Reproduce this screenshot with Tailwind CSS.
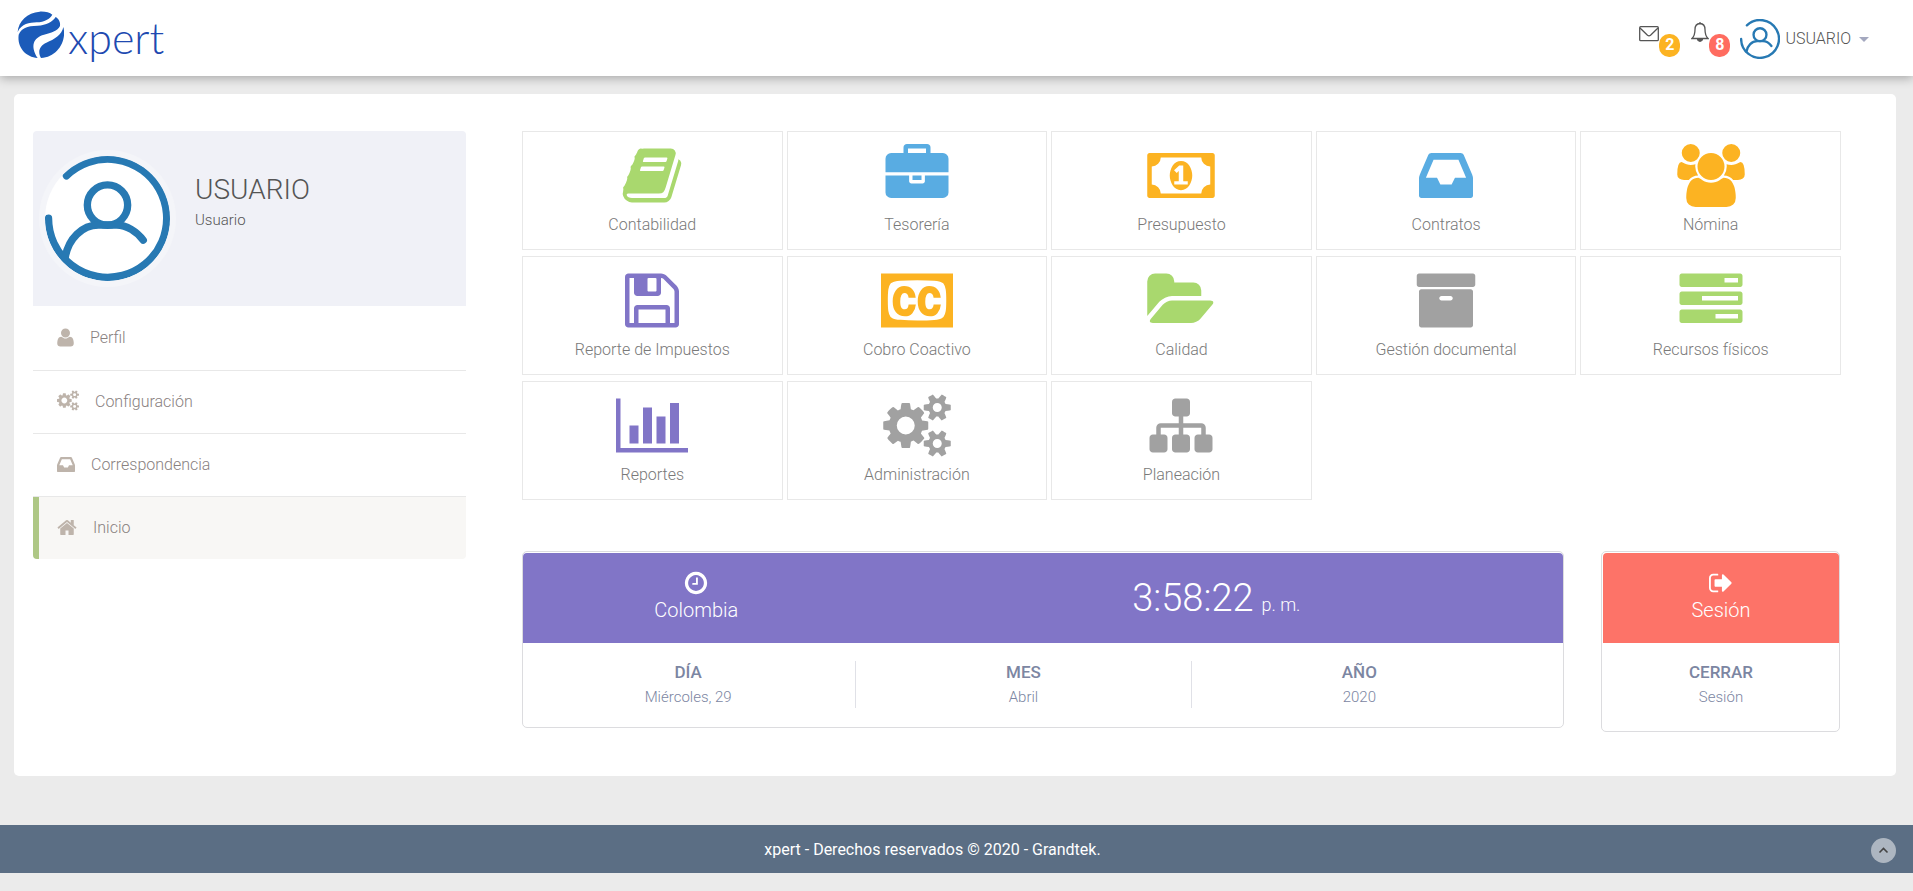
<!DOCTYPE html>
<html lang="es">
<head>
<meta charset="utf-8">
<title>xpert</title>
<script src="https://cdn.jsdelivr.net/npm/@tailwindcss/browser@4"></script>
</head>
<body class="bg-[#ebebeb] font-['Roboto','Liberation_Sans',sans-serif] text-base leading-5 font-light text-[#797979]">

<svg class="hidden" aria-hidden="true">
  <symbol id="cogs" viewBox="0 0 1920 1792"><path d="M896 896q0-106-75-181t-181-75-181 75-75 181 75 181 181 75 181-75 75-181zm768 512q0-52-38-90t-90-38-90 38-38 90q0 53 37.500 90.500t90.500 37.500 90.500-37.500 37.500-90.500zm0-1024q0-52-38-90t-90-38-90 38-38 90q0 53 37.500 90.500t90.500 37.500 90.500-37.500 37.500-90.500zm-384 421v185q0 10-7 19.500t-16 10.500l-155 24q-11 35-32 76 34 48 90 115 7 11 7 20 0 12-7 19-23 30-82.500 89.500t-78.500 59.500q-11 0-21-7l-115-90q-37 19-77 31-11 108-23 155-7 24-30 24h-186q-11 0-20-7.500t-10-17.500l-23-153q-34-10-75-31l-118 89q-7 7-20 7-11 0-21-8-144-133-144-160 0-9 7-19 10-14 41-53t47-61q-23-44-35-82l-152-24q-10-1-17-9.500t-7-19.500v-185q0-10 7-19.500t16-10.500l155-24q11-35 32-76-34-48-90-115-7-11-7-20 0-12 7-20 22-30 82-89t79-59q11 0 21 7l115 90q34-18 77-32 11-108 23-154 7-24 30-24h186q11 0 20 7.500t10 17.500l23 153q34 10 75 31l118-89q8-7 20-7 11 0 21 8 144 133 144 160 0 8-7 19-12 16-42 54t-45 60q23 48 34 82l152 23q10 2 17 10.500t7 19.500zm640 533v140q0 16-149 31-12 27-30 52 51 113 51 138 0 4-4 7-122 71-124 71-8 0-46-47t-52-68q-20 2-30 2t-30-2q-14 21-52 68t-46 47q-2 0-124-71-4-3-4-7 0-25 51-138-18-25-30-52-149-15-149-31v-140q0-16 149-31 13-29 30-52-51-113-51-138 0-4 4-7 4-2 35-20t59-34 30-16q8 0 46 46.500t52 67.500q20-2 30-2t30 2q51-71 92-112l6-2q4 0 124 70 4 3 4 7 0 25-51 138 17 23 30 52 149 15 149 31zm0-1024v140q0 16-149 31-12 27-30 52 51 113 51 138 0 4-4 7-122 71-124 71-8 0-46-47t-52-68q-20 2-30 2t-30-2q-14 21-52 68t-46 47q-2 0-124-71-4-3-4-7 0-25 51-138-18-25-30-52-149-15-149-31v-140q0-16 149-31 13-29 30-52-51-113-51-138 0-4 4-7 4-2 35-20t59-34 30-16q8 0 46 46.500t52 67.500q20-2 30-2t30 2q51-71 92-112l6-2q4 0 124 70 4 3 4 7 0 25-51 138 17 23 30 52 149 15 149 31z"/></symbol>
  <symbol id="inbox" viewBox="128 0 1536 1792"><path d="M1151 960h316q-1-3-2.500-8.500t-2.500-7.500l-212-496h-708l-212 496q-1 3-2.500 8.500t-2.500 7.500h316l95 192h320zm513 30v482q0 26-19 45t-45 19h-1408q-26 0-45-19t-19-45v-482q0-62 25-123l238-552q10-25 36.500-42t52.500-17h832q26 0 52.500 17t36.500 42l238 552q25 61 25 123z"/></symbol>
  <symbol id="avatar" viewBox="0 0 124 124"><g fill="none" stroke="#2779b3" stroke-width="7.300" stroke-linecap="round" stroke-linejoin="round"><path d="M21.300 19.700A58.600 58.600 0 1 1 3.500 61.700"/><circle cx="62" cy="48.700" r="20"/><path d="M20 101C23 82 37 68.500 53 68.500H71C81 68.500 91 75 97.500 83.500"/></g></symbol>
</svg>

<header class="relative flex h-[76px] items-center justify-between bg-white pl-4 pr-11 shadow-[0_2px_10px_rgba(0,0,0,0.3)]">
  <a href="#" class="flex items-center gap-1 text-[#2049b0]" aria-label="xpert">
    <svg class="-mt-2 size-12" viewBox="0 0 144 144" fill="#1b5bb9">
      <path d="M5 66C7 34 34 7 71 5C87 4 101 8 109 14C102 26 85 37 62 37C40 38 17 41 5 66Z"/>
      <path d="M8 74C15 56 33 47 65 47C91 46 110 35 119 21C129 27 134 38 132 48C125 63 105 69 84 74C52 83 42 108 65 144C30 141 3 113 8 74Z"/>
      <path d="M142 51C153 91 125 142 75 144C64 124 71 107 91 98C115 88 138 74 142 51Z"/>
    </svg>
    <span class="font-['Lato','Liberation_Sans',sans-serif] text-[43px] leading-[48px] font-light">xpert</span>
  </a>
  <div class="flex items-center pt-0.5">
    <a href="#" class="flex" aria-label="Mensajes">
      <svg class="mt-[3px] h-[17px] w-5" viewBox="0 0 20 17" fill="none" stroke="#555" stroke-width="1.300"><rect x=".7" y="1.700" width="18.600" height="14" rx="1"/><path d="M1 3L8.500 10.300Q10 11.500 11.500 10.300L19 3"/></svg>
      <span class="mt-3 flex h-[23px] w-[21px] items-center justify-center rounded-[10px] bg-[#fcb322] font-bold text-white">2</span>
    </a>
    <a href="#" class="ml-[11px] flex" aria-label="Notificaciones">
      <svg class="h-5 w-[18px]" viewBox="0 0 18 20" fill="none" stroke="#555" stroke-width="1.300"><path d="M9 1.500C5.500 1.700 4 4.200 4 7.500C4 12 3 14.500 1 16.500H17C15 14.500 14 12 14 7.500C14 4.200 12.500 1.700 9 1.500ZM9 0V2"/><path d="M6.500 17C7 20 11 20 11.500 17Z" fill="#555"/></svg>
      <span class="mt-3 flex h-[23px] w-[21px] items-center justify-center rounded-[10px] bg-[#ff6c60] font-bold text-white">8</span>
    </a>
    <button type="button" class="ml-2.5 flex items-center text-[#555]">
      <svg class="size-10"><use href="#avatar"/></svg>
      <span class="ml-[5px]">USUARIO</span>
      <span class="ml-2 border-x-5 border-t-5 border-x-transparent border-t-[#a4a8bf]"></span>
    </button>
  </div>
</header>

<main class="mx-[14px] mt-[18px] mr-[17px] grid grid-cols-[433fr_1319fr] gap-14 rounded-[5px] bg-white pt-[37px] pr-[55px] pb-11 pl-[19px]">
  <aside>
    <div class="flex h-[175px] rounded-t-[4px] bg-[#f0f1f7] pl-1.5 pt-[19px]">
      <div class="size-[137px] rounded-full bg-[#f4f5f9] p-1.5"><svg class="size-[125px] rounded-full bg-white"><use href="#avatar"/></svg></div>
      <div class="ml-[19px] pt-6 text-[#555]">
        <h1 class="text-[28px] leading-8">USUARIO</h1>
        <p class="mt-1 text-[15px]">Usuario</p>
      </div>
    </div>
    <nav class="text-[#89817f]">
      <a href="#" class="flex h-[65px] items-center border-b border-[#e8e8e8] pl-6"><svg class="mb-0.5 h-[21px] w-[17px] fill-[#beb4ab]" viewBox="192 0 1408 1792"><path d="M1600 1405q0 120-73 189.500t-194 69.500h-874q-121 0-194-69.500t-73-189.500q0-53 3.500-103.500t14-109 26.500-108.500 43-97.500 62-81 85.500-53.500 111.500-20q9 0 42 21.500t74.500 48 108 48 133.500 21.500 133.500-21.500 108-48 74.500-48 42-21.500q61 0 111.500 20t85.500 53.500 62 81 43 97.500 26.500 108.500 14 109 3.500 103.500zm-320-893q0 159-112.500 271.500t-271.500 112.500-271.500-112.500-112.500-271.500 112.500-271.500 271.500-112.500 271.500 112.500 112.500 271.500z"/></svg><span class="ml-4">Perfil</span></a>
      <a href="#" class="flex h-[63px] items-center border-b border-[#e8e8e8] pl-6"><svg class="mb-1 h-[21px] w-[22px] fill-[#beb4ab]"><use href="#cogs"/></svg><span class="ml-4">Configuración</span></a>
      <a href="#" class="flex h-[63px] items-center border-b border-[#e8e8e8] pl-6"><svg class="mb-0.5 h-[21px] w-[18px] fill-[#beb4ab]"><use href="#inbox"/></svg><span class="ml-4">Correspondencia</span></a>
      <a href="#" class="flex h-[62px] items-center rounded-b-[4px] border-l-6 border-[#aec785] bg-[#f8f7f5] pl-[18px]" aria-current="page"><svg class="mb-0.5 h-[21px] w-5 fill-[#beb4ab]" viewBox="64 0 1664 1792"><path d="M1472 992v480q0 26-19 45t-45 19h-384v-384h-256v384h-384q-26 0-45-19t-19-45v-480q0-1 .5-3t.5-3l575-474 575 474q1 2 1 6zm223-69l-62 74q-8 9-21 11h-3q-13 0-21-7l-692-577-692 577q-12 8-24 7-13-2-21-11l-62-74q-8-10-7-23.500t11-21.500l719-599q32-26 76-26t76 26l244 204v-195q0-14 9-23t23-9h192q14 0 23 9t9 23v408l219 182q10 8 11 21.500t-7 23.500z"/></svg><span class="ml-4">Inicio</span></a>
    </nav>
  </aside>

  <div>
    <div class="grid grid-cols-5 gap-x-1 gap-y-1.5 text-center">
      <a href="#" class="flex h-[119px] flex-col items-center border border-[#e8e8e8] pt-3"><svg class="h-[63px] w-[72px] fill-[#a9d86e]" viewBox="0 0 1792 1792"><path d="M1703 478q40 57 18 129l-275 906q-19 64-76.500 107.500t-122.500 43.500h-923q-77 0-148.500-53.500t-99.500-131.500q-24-67-2-127 0-4 3-27t4-37q1-8-3-21.500t-3-19.500q2-11 8-21t16.500-23.500 16.500-23.500q23-38 45-91.500t30-91.500q3-10 .5-30t-.5-28q3-11 17-28t17-23q21-36 42-92t25-90q1-9-2.500-32t.5-28q4-13 22-30.500t22-22.500q19-26 42.500-84.500t27.500-96.500q1-8-3-25.500t-2-26.500q2-8 9-18t18-23 17-21q8-12 16.500-30.500t15-35 16-36 19.500-32 26.500-23.500 36-11.500 47.500 5.500l-1 3q38-9 51-9h761q74 0 114 56t18 130l-274 906q-36 119-71.500 153.500t-128.500 34.500h-869q-27 0-38 15-11 16-1 43 24 70 144 70h923q29 0 56-15.500t35-41.500l300-987q7-22 5-57 38 15 59 43zm-1064 2q-4 13 2 22.500t20 9.500h608q13 0 25.500-9.500t16.500-22.500l21-64q4-13-2-22.500t-20-9.500h-608q-13 0-25.500 9.500t-16.500 22.500zm-83 256q-4 13 2 22.500t20 9.500h608q13 0 25.500-9.500t16.500-22.500l21-64q4-13-2-22.500t-20-9.500h-608q-13 0-25.500 9.500t-16.500 22.500z"/></svg><span class="mt-2">Contabilidad</span></a>
      <a href="#" class="flex h-[119px] flex-col items-center border border-[#e8e8e8] pt-3"><svg class="h-[63px] w-[72px] fill-[#59ace2]" viewBox="0 0 1792 1792"><path d="M640 256h512v-128h-512v128zm1152 640v480q0 66-47 113t-113 47h-1472q-66 0-113-47t-47-113v-480h672v160q0 26 19 45t45 19h320q26 0 45-19t19-45v-160h672zm-768 0v128h-256v-128h256zm768-480v384h-1792v-384q0-66 47-113t113-47h352v-160q0-40 28-68t68-28h576q40 0 68 28t28 68v160h352q66 0 113 47t47 113z"/></svg><span class="mt-2">Tesorería</span></a>
      <a href="#" class="flex h-[119px] flex-col items-center border border-[#e8e8e8] pt-3"><svg class="h-[63px] w-[72px] fill-[#fcb322]" viewBox="0 0 1920 1792"><path d="M768 1152h384v-96h-128v-448h-114l-148 137 77 80q42-37 55-57h2v288h-128v96zm512-256q0 70-21 142t-59.500 134-101.500 101-138 39-138-39-101.500-101-59.500-134-21-142 21-142 59.500-134 101.500-101 138-39 138 39 101.500 101 59.500 134 21 142zm512 256v-512q-106 0-181-75t-75-181h-1152q0 106-75 181t-181 75v512q106 0 181 75t75 181h1152q0-106 75-181t181-75zm128-832v1152q0 26-19 45t-45 19h-1792q-26 0-45-19t-19-45v-1152q0-26 19-45t45-19h1792q26 0 45 19t19 45z"/></svg><span class="mt-2">Presupuesto</span></a>
      <a href="#" class="flex h-[119px] flex-col items-center border border-[#e8e8e8] pt-3"><svg class="h-[63px] w-[72px] fill-[#59ace2]"><use href="#inbox"/></svg><span class="mt-2">Contratos</span></a>
      <a href="#" class="flex h-[119px] flex-col items-center border border-[#e8e8e8] pt-3"><svg class="h-[63px] w-[72px] fill-[#fcb322]" viewBox="0 0 1920 1792"><path d="M593 896q-162 5-265 128h-134q-82 0-138-40.500t-56-118.500q0-353 124-353 6 0 43.500 21t97.500 42.500 119 21.500q67 0 133-23-5 37-5 66 0 139 81 256zm1071 637q0 120-73 189.500t-194 69.500h-874q-121 0-194-69.500t-73-189.500q0-53 3.500-103.500t14-109 26.500-108.500 43-97.500 62-81 85.500-53.500 111.500-20q10 0 43 21.500t73 48 107 48 135 21.500 135-21.500 107-48 73-48 43-21.500q61 0 111.500 20t85.500 53.500 62 81 43 97.500 26.500 108.500 14 109 3.500 103.500zm-1024-1277q0 106-75 181t-181 75-181-75-75-181 75-181 181-75 181 75 75 181zm704 384q0 159-112.500 271.500t-271.500 112.500-271.500-112.500-112.500-271.500 112.500-271.500 271.500-112.500 271.500 112.500 112.500 271.500zm576 225q0 78-56 118.500t-138 40.500h-134q-103-123-265-128 81-117 81-256 0-29-5-66 66 23 133 23 59 0 119-21.500t97.500-42.500 43.500-21q124 0 124 353zm-128-609q0 106-75 181t-181 75-181-75-75-181 75-181 181-75 181 75 75 181z"/></svg><span class="mt-2">Nómina</span></a>
      <a href="#" class="flex h-[119px] flex-col items-center border border-[#e8e8e8] pt-3"><svg class="h-[63px] w-[72px] fill-[#8175c7]" viewBox="0 0 1792 1792"><path d="M512 1536h768v-384h-768v384zm896 0h128v-896q0-14-10-38.500t-20-34.500l-281-281q-10-10-34-20t-39-10v416q0 40-28 68t-68 28h-576q-40 0-68-28t-28-68v-416h-128v1280h128v-416q0-40 28-68t68-28h832q40 0 68 28t28 68v416zm-384-928v-320q0-13-9.500-22.500t-22.500-9.500h-192q-13 0-22.500 9.500t-9.500 22.500v320q0 13 9.500 22.500t22.500 9.500h192q13 0 22.500-9.500t9.500-22.500zm640 32v928q0 40-28 68t-68 28h-1344q-40 0-68-28t-28-68v-1344q0-40 28-68t68-28h928q40 0 88 20t76 48l280 280q28 28 48 76t20 88z"/></svg><span class="mt-2">Reporte de Impuestos</span></a>
      <a href="#" class="flex h-[119px] flex-col items-center border border-[#e8e8e8] pt-3"><svg class="h-[63px] w-[72px] fill-[#fcb322]" viewBox="0 0 2048 1792"><path d="M785 1008h207q-14 158-98.500 248.500t-214.500 90.500q-162 0-254.500-116t-92.500-316q0-194 93-311.500t233-117.500q148 0 232 87t97 247h-203q-5-64-35.500-99t-81.500-35q-57 0-88.500 60.500t-31.500 177.500q0 48 5 84t18 69.500 40 51.500 66 18q95 0 109-139zm712 0h206q-14 158-98 248.500t-214 90.500q-162 0-254.500-116t-92.500-316q0-194 93-311.500t233-117.500q148 0 232 87t97 247h-204q-4-64-35-99t-81-35q-57 0-88.500 60.500t-31.500 177.500q0 48 5 84t18 69.500 39.500 51.500 65.500 18q49 0 76.500-38t33.500-101zm359-119q0-207-15.500-307t-60.500-161q-6-8-13.500-14t-21.500-15-16-11q-86-63-697-63-625 0-710 63-5 4-17.500 11.500t-21 14-14.500 14.500q-45 60-60 159.500t-15 308.500q0 208 15 307.500t60 160.500q6 8 15 15t20.500 14 17.500 12q44 33 239.500 49t470.500 16q610 0 697-65 5-4 17-11t20.500-14 13.500-16q46-60 61-159t15-309zm192-761v1536h-2048v-1536h2048z"/></svg><span class="mt-2">Cobro Coactivo</span></a>
      <a href="#" class="flex h-[119px] flex-col items-center border border-[#e8e8e8] pt-3"><svg class="h-[63px] w-[72px] fill-[#a9d86e]" viewBox="0 0 1920 1792"><path d="M1879 952q0 31-31 66l-336 396q-43 51-120.500 86.500t-143.500 35.500h-1088q-34 0-60.500-13t-26.500-43q0-31 31-66l336-396q43-51 120.500-86.500t143.500-35.500h1088q34 0 60.500 13t26.500 43zm-343-344v160h-832q-94 0-197 47.500t-164 119.500l-337 396-5 6q0-4-.5-12.500t-.5-12.500v-960q0-92 66-158t158-66h320q92 0 158 66t66 158v32h544q92 0 158 66t66 158z"/></svg><span class="mt-2">Calidad</span></a>
      <a href="#" class="flex h-[119px] flex-col items-center border border-[#e8e8e8] pt-3"><svg class="h-[63px] w-[72px] fill-[#a1a1a1]" viewBox="0 0 1792 1792"><path d="M1088 832q0-26-19-45t-45-19h-256q-26 0-45 19t-19 45 19 45 45 19h256q26 0 45-19t19-45zm576-192v960q0 26-19 45t-45 19h-1408q-26 0-45-19t-19-45v-960q0-26 19-45t45-19h1408q26 0 45 19t19 45zm64-448v256q0 26-19 45t-45 19h-1536q-26 0-45-19t-19-45v-256q0-26 19-45t45-19h1536q26 0 45 19t19 45z"/></svg><span class="mt-2">Gestión documental</span></a>
      <a href="#" class="flex h-[119px] flex-col items-center border border-[#e8e8e8] pt-3"><svg class="h-[63px] w-[72px] fill-[#a9d86e]" viewBox="0 0 1792 1792"><path d="M1280 384h384v-128h-384v128zm-640 512h1024v-128h-1024v128zm384 512h640v-128h-640v128zm768-192v256q0 26-19 45t-45 19h-1664q-26 0-45-19t-19-45v-256q0-26 19-45t45-19h1664q26 0 45 19t19 45zm0-512v256q0 26-19 45t-45 19h-1664q-26 0-45-19t-19-45v-256q0-26 19-45t45-19h1664q26 0 45 19t19 45zm0-512v256q0 26-19 45t-45 19h-1664q-26 0-45-19t-19-45v-256q0-26 19-45t45-19h1664q26 0 45 19t19 45z"/></svg><span class="mt-2">Recursos físicos</span></a>
      <a href="#" class="flex h-[119px] flex-col items-center border border-[#e8e8e8] pt-3"><svg class="h-[63px] w-[72px] fill-[#8175c7]" viewBox="0 0 2048 1792"><path d="M640 896v512h-256v-512h256zm384-512v1024h-256v-1024h256zm1024 1152v128h-2048v-1536h128v1408h1920zm-640-896v768h-256v-768h256zm384-384v1152h-256v-1152h256z"/></svg><span class="mt-2">Reportes</span></a>
      <a href="#" class="flex h-[119px] flex-col items-center border border-[#e8e8e8] pt-3"><svg class="h-[63px] w-[72px] fill-[#a1a1a1]"><use href="#cogs"/></svg><span class="mt-2">Administración</span></a>
      <a href="#" class="flex h-[119px] flex-col items-center border border-[#e8e8e8] pt-3"><svg class="h-[63px] w-[72px] fill-[#a1a1a1]" viewBox="0 0 1792 1792"><path d="M1792 1248v320q0 40-28 68t-68 28h-320q-40 0-68-28t-28-68v-320q0-40 28-68t68-28h96v-192h-512v192h96q40 0 68 28t28 68v320q0 40-28 68t-68 28h-320q-40 0-68-28t-28-68v-320q0-40 28-68t68-28h96v-192h-512v192h96q40 0 68 28t28 68v320q0 40-28 68t-68 28h-320q-40 0-68-28t-28-68v-320q0-40 28-68t68-28h96v-192q0-52 38-90t90-38h512v-192h-96q-40 0-68-28t-28-68v-320q0-40 28-68t68-28h320q40 0 68 28t28 68v320q0 40-28 68t-68 28h-96v192h512q52 0 90 38t38 90v192h96q40 0 68 28t28 68z"/></svg><span class="mt-2">Planeación</span></a>
    </div>

    <div class="mt-[51px] grid grid-cols-[1042fr_239fr] items-start gap-[37px] pr-px text-center text-[#7c86a2]">
      <section class="rounded-[5px] border border-[#dcdcdf] pt-px">
        <div class="grid h-[90px] grid-cols-[1fr_2fr] rounded-t-[4px] bg-[#8175c7] text-white">
          <div class="flex flex-col items-center pt-[17px]">
            <svg class="size-[26px] fill-white" viewBox="0 0 1792 1792"><path d="M1024 544v448q0 14-9 23t-23 9h-320q-14 0-23-9t-9-23v-64q0-14 9-23t23-9h224v-352q0-14 9-23t23-9h64q14 0 23 9t9 23zm416 352q0-148-73-273t-198-198-273-73-273 73-198 198-73 273 73 273 198 198 273 73 273-73 198-198 73-273zm224 0q0 209-103 385.500t-279.500 279.500-385.500 103-385.500-103-279.500-279.500-103-385.500 103-385.500 279.500-279.500 385.500-103 385.500 103 279.500 279.500 103 385.500z"/></svg>
            <span class="mt-0.5 text-xl leading-6">Colombia</span>
          </div>
          <div class="pt-6"><span class="text-[38px] leading-[42px]">3:58:22</span> <span class="ml-1 text-lg">p. m.</span></div>
        </div>
        <div class="-ml-0.5 mr-9 grid grid-cols-3 pt-[18px] pb-[19px]">
          <div class="h-[47px] border-r border-[#e0e1e7]"><h2 class="text-[17px] leading-[22px] font-medium">DÍA</h2><p class="mt-1 text-[15px]">Miércoles, 29</p></div>
          <div class="h-[47px] border-r border-[#e0e1e7]"><h2 class="text-[17px] leading-[22px] font-medium">MES</h2><p class="mt-1 text-[15px]">Abril</p></div>
          <div class="h-[47px]"><h2 class="text-[17px] leading-[22px] font-medium">AÑO</h2><p class="mt-1 text-[15px]">2020</p></div>
        </div>
      </section>
      <a href="#" class="block rounded-[5px] border border-[#dcdcdf] pt-px pl-px">
        <div class="flex h-[90px] flex-col items-center rounded-t-[4px] bg-[#fd7368] pt-[17px] text-white">
          <svg class="h-[26px] w-6 fill-white" viewBox="64 0 1664 1792"><path d="M704 1440q0 4 1 20t.5 26.500-3 23.500-10 19.500-20.500 6.500h-320q-119 0-203.500-84.500t-84.500-203.500v-704q0-119 84.500-203.500t203.500-84.500h320q13 0 22.500 9.500t9.500 22.500q0 4 1 20t.5 26.500-3 23.500-10 19.500-20.500 6.500h-320q-66 0-113 47t-47 113v704q0 66 47 113t113 47h312l11.500 1 11.500 3 8 5.500 7 9 2 13.500zm928-544q0 26-19 45l-544 544q-19 19-45 19t-45-19-19-45v-288h-448q-26 0-45-19t-19-45v-384q0-26 19-45t45-19h448v-288q0-26 19-45t45-19 45 19l544 544q19 19 19 45z"/></svg>
          <span class="mt-0.5 text-xl leading-6">Sesión</span>
        </div>
        <div class="pt-[18px] pb-[23px]"><div class="h-[47px]"><h2 class="text-[17px] leading-[22px] font-medium">CERRAR</h2><p class="mt-1 text-[15px]">Sesión</p></div></div>
      </a>
    </div>
  </div>
</main>

<footer class="mt-[49px] flex h-12 items-center bg-[#5b6e84] pt-0.5 pr-[17px] font-normal text-white">
  <p class="mr-1.5 flex-1 text-center">xpert - Derechos reservados © 2020 - Grandtek.</p>
  <a href="#" class="flex size-[25px] items-center justify-center rounded-full bg-[#adb6c1]" aria-label="Volver arriba"><svg class="size-[11px]" viewBox="0 0 11 11" fill="none" stroke="#444" stroke-width="1.600"><path d="M1.500 7.500L5.500 3.500L9.500 7.500"/></svg></a>
</footer>
</body>
</html>
